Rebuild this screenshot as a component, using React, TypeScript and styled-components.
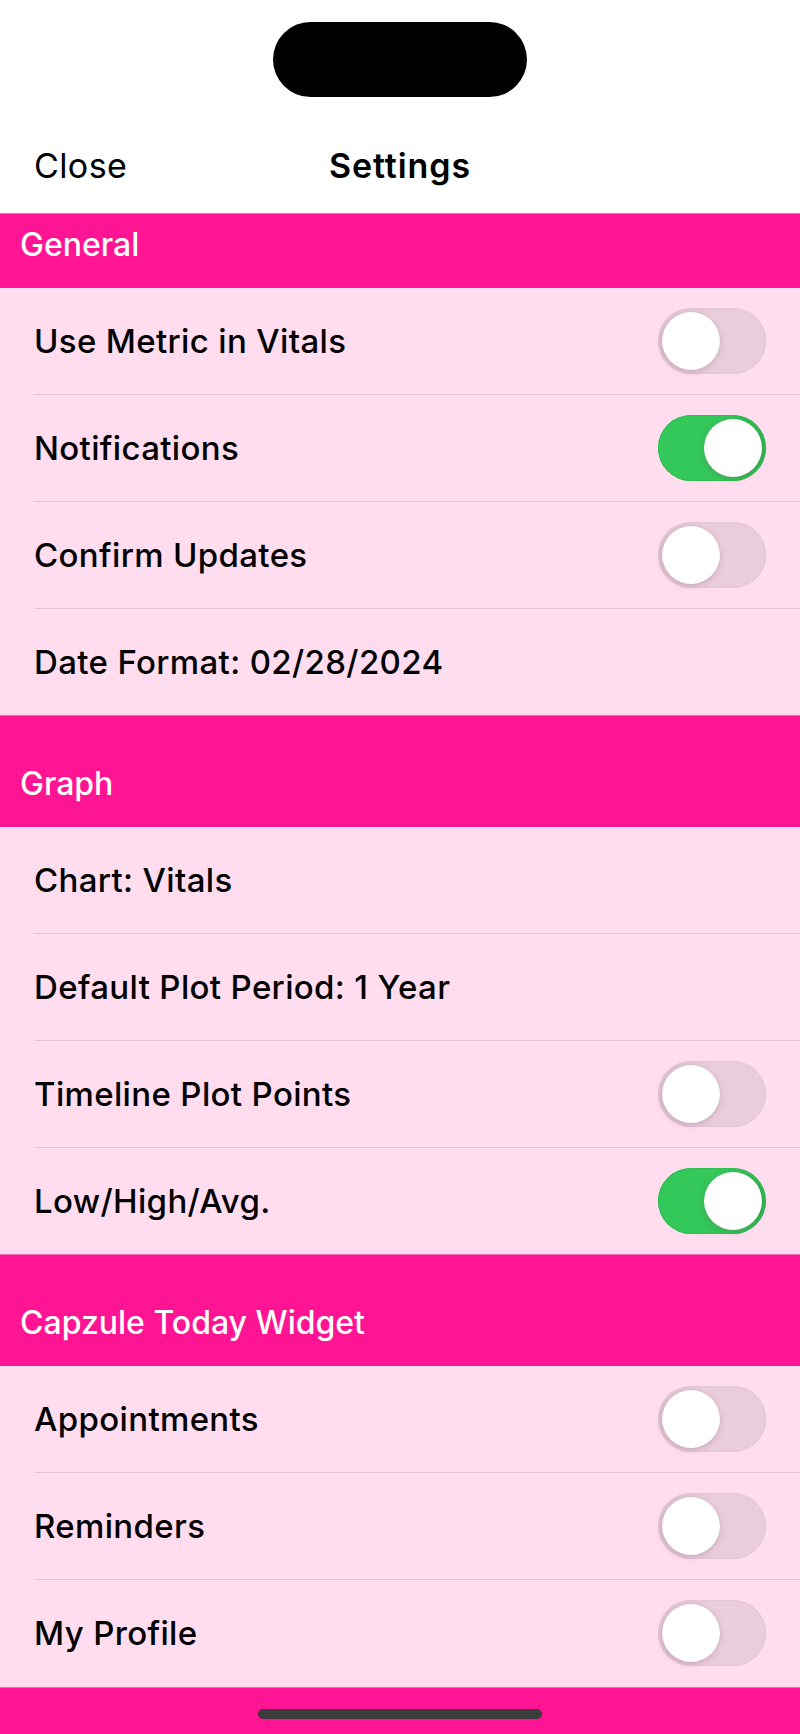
import React from "react";
import styled, { createGlobalStyle } from "styled-components";

const GlobalStyle = createGlobalStyle`
  html, body { margin: 0; padding: 0; background: #ffffff; }
  body { font-family: Inter, "Noto Sans", "Liberation Sans", sans-serif; -webkit-font-smoothing: antialiased; }
  * { box-sizing: border-box; }
`;

const Screen = styled.div`
  width: 800px;
  height: 1734px;
  display: flex;
  flex-direction: column;
  background: #ff1493;
  overflow: hidden;
`;

const TopArea = styled.header`
  height: 214px;
  background: #ffffff;
  display: flex;
  flex-direction: column;
  align-items: center;
  padding-top: 22px;
`;

const Island = styled.div`
  width: 254px;
  height: 75px;
  border-radius: 38px;
  background: #000000;
`;

const NavBar = styled.nav`
  align-self: stretch;
  margin-top: 36px;
  height: 66px;
  display: grid;
  grid-template-columns: 1fr auto 1fr;
  align-items: center;
  padding: 0 34px;
  color: #000000;
  font-size: 34px;
  line-height: 66px;
`;

const NavButton = styled.span`
  justify-self: start;
  font-weight: 400;
  letter-spacing: 0.4px;
`;

const NavTitle = styled.span`
  font-weight: 600;
  letter-spacing: 0.9px;
`;

const SectionHeader = styled.div<{ $first?: boolean }>`
  background: #ff1493;
  color: #ffffff;
  font-size: 32px;
  font-weight: 500;
  line-height: 40px;
  padding: ${(p) => (p.$first ? "11px" : "48px")} 20px 23px 20px;
  border-top: 1px solid #f06aae;
  margin-top: -1px;
`;

const Group = styled.div`
  background: #ffddee;
  display: flex;
  flex-direction: column;
`;

const Row = styled.div`
  height: 107px;
  padding-left: 34px;
  display: flex;
`;

const RowInner = styled.div<{ $last?: boolean }>`
  flex: 1;
  display: flex;
  align-items: center;
  justify-content: space-between;
  padding-right: 34px;
  border-bottom: 1px solid ${(p) => (p.$last ? "transparent" : "#e3c6d3")};
`;

const Label = styled.span`
  font-size: 33px;
  font-weight: 500;
  color: #000000;
  letter-spacing: 0.35px;
`;

const Track = styled.div<{ $on?: boolean }>`
  width: 108px;
  height: 66px;
  border-radius: 33px;
  padding: 4px;
  display: flex;
  justify-content: ${(p) => (p.$on ? "flex-end" : "flex-start")};
  align-items: center;
  background: ${(p) =>
    p.$on
      ? "linear-gradient(90deg, #34c759 0%, #34c759 60%, #2fb650 100%)"
      : "linear-gradient(90deg, #dfc3d1 0%, #e9cddb 50%, #e9cddb 100%)"};
  box-shadow: inset 0 0 0 1px ${(p) => (p.$on ? "#2fbd52" : "#e2c6d4")};
`;

const Thumb = styled.div`
  width: 58px;
  height: 58px;
  border-radius: 50%;
  background: #ffffff;
  box-shadow: 0 2px 6px rgba(120, 60, 90, 0.22), 0 0 0 0.5px rgba(0, 0, 0, 0.06);
`;

const BottomBar = styled.footer`
  flex: 1;
  background: #ff1493;
  display: flex;
  justify-content: center;
  padding-top: 21px;
  border-top: 1px solid #f06aae;
`;

const HomeIndicator = styled.div`
  width: 284px;
  height: 10px;
  border-radius: 5px;
  background: #3b3b3b;
`;

type Item = { label: string; toggle?: boolean; on?: boolean };

const sections: { title: string; items: Item[] }[] = [
  {
    title: "General",
    items: [
      { label: "Use Metric in Vitals", toggle: true, on: false },
      { label: "Notifications", toggle: true, on: true },
      { label: "Confirm Updates", toggle: true, on: false },
      { label: "Date Format: 02/28/2024" },
    ],
  },
  {
    title: "Graph",
    items: [
      { label: "Chart: Vitals" },
      { label: "Default Plot Period: 1 Year" },
      { label: "Timeline Plot Points", toggle: true, on: false },
      { label: "Low/High/Avg.", toggle: true, on: true },
    ],
  },
  {
    title: "Capzule Today Widget",
    items: [
      { label: "Appointments", toggle: true, on: false },
      { label: "Reminders", toggle: true, on: false },
      { label: "My Profile", toggle: true, on: false },
    ],
  },
];

export default function App() {
  return (
    <>
      <GlobalStyle />
      <Screen>
        <TopArea>
          <Island />
          <NavBar>
            <NavButton>Close</NavButton>
            <NavTitle>Settings</NavTitle>
            <span />
          </NavBar>
        </TopArea>
        {sections.map((s, si) => (
          <React.Fragment key={s.title}>
            <SectionHeader $first={si === 0}>{s.title}</SectionHeader>
            <Group>
              {s.items.map((it, i) => {
                const last = i === s.items.length - 1;
                return (
                  <Row key={it.label}>
                    <RowInner $last={last}>
                      <Label>{it.label}</Label>
                      {it.toggle && (
                        <Track $on={it.on}>
                          <Thumb />
                        </Track>
                      )}
                    </RowInner>
                  </Row>
                );
              })}
            </Group>
          </React.Fragment>
        ))}
        <BottomBar>
          <HomeIndicator />
        </BottomBar>
      </Screen>
    </>
  );
}
